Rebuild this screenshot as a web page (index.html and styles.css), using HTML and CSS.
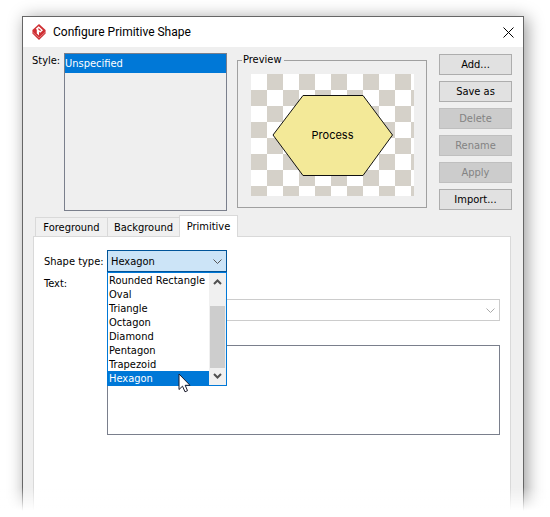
FILE: index.html
```html
<!DOCTYPE html>
<html lang="en">
<head>
<meta charset="utf-8">
<title>Configure Primitive Shape</title>
<link rel="stylesheet" href="styles.css">
</head>
<body>
<main class="dialog">
  <header class="titlebar">
    <svg class="logo" viewBox="0 0 14 16" aria-hidden="true">
      <path fill="#cf2f33" d="M7 0 13.600 6 13.600 9.500 7 16 .4 9.500 .4 6Z"/>
      <path fill="none" stroke="#fff" stroke-opacity=".6" stroke-width=".6" d="M.5 8 7 13.800 13.500 8"/>
      <path fill="#fff" d="M3.800 4.800 6.700 2.300 11 6.200 8.200 8.700 7 7.700 7 11.500 4.800 9.600V5.700Z"/>
      <path fill="#cf2f33" d="M6.800 4.200 9.100 6.200 8.100 7.100 5.900 5.100Z"/>
    </svg>
    <h1 class="title">Configure Primitive Shape</h1>
    <button class="close" type="button" aria-label="Close">
      <svg viewBox="0 0 11 11" aria-hidden="true"><path d="M.5 .5 10.500 10.500M10.500 .5 .5 10.500"/></svg>
    </button>
  </header>

  <section class="top">
    <label class="style-label" for="style-list">Style:</label>
    <select class="style-list" id="style-list" size="8">
      <option selected>Unspecified</option>
    </select>
    <fieldset class="preview">
      <legend>Preview</legend>
      <div class="canvas">
        <svg class="shape" viewBox="0 0 122 82" aria-hidden="true">
          <path d="M31 1.500H91L120.500 41 91 81.500H31L1 41Z"/>
        </svg>
        <span class="shape-text">Process</span>
      </div>
    </fieldset>
    <div class="actions">
      <button type="button">Add...</button>
      <button type="button">Save as</button>
      <button type="button" disabled>Delete</button>
      <button type="button" disabled>Rename</button>
      <button type="button" disabled>Apply</button>
      <button type="button">Import...</button>
    </div>
  </section>

  <nav class="tabs" role="tablist">
    <button class="tab" type="button" role="tab">Foreground</button>
    <button class="tab" type="button" role="tab">Background</button>
    <button class="tab active" type="button" role="tab" aria-selected="true">Primitive</button>
  </nav>

  <section class="panel" role="tabpanel">
    <label class="row-label" for="shape-type">Shape type:</label>
    <div class="combo open">
      <select id="shape-type"><option>Hexagon</option></select>
      <svg class="chevron" viewBox="0 0 9 5" aria-hidden="true"><path d="M.5 .5 4.500 4.500 8.500 .5"/></svg>
      <div class="popup">
        <select class="options" size="8" aria-label="Shapes">
          <option>Rounded Rectangle</option>
          <option>Oval</option>
          <option>Triangle</option>
          <option>Octagon</option>
          <option>Diamond</option>
          <option>Pentagon</option>
          <option>Trapezoid</option>
          <option selected>Hexagon</option>
        </select>
        <div class="scrollbar">
          <svg viewBox="0 0 9 6" aria-hidden="true"><path d="M1 5 4.500 1.500 8 5"/></svg>
          <div class="thumb"></div>
          <svg viewBox="0 0 9 6" aria-hidden="true"><path d="M1 1 4.500 4.500 8 1"/></svg>
        </div>
        <svg class="cursor" viewBox="0 0 13 20" aria-hidden="true">
          <path d="M1 1V16.500L4.500 13.200 7 18.800 9.500 17.700 7.200 12.300H12Z"/>
        </svg>
      </div>
    </div>
    <label class="row-label" for="text-source">Text:</label>
    <div class="combo source">
      <select id="text-source"><option></option></select>
      <svg class="chevron" viewBox="0 0 9 5" aria-hidden="true"><path d="M.5 .5 4.500 4.500 8.500 .5"/></svg>
    </div>
    <textarea class="text-area" aria-label="Text content"></textarea>
  </section>
</main>
</body>
</html>
```
FILE: styles.css
```css
* {
  box-sizing: border-box;
}

body {
  margin: 0;
  padding: 16px 26px 0 22px;
  min-height: 100vh;
  display: flex;
  overflow: hidden;
  background: #fff;
  color: #000;
  font: 11px/14px "DejaVu Sans Condensed", "Noto Sans", sans-serif;
}

/* The lower edge of the window dissolves into the page. */
body::after {
  content: "";
  position: fixed;
  inset: auto 0 0 0;
  height: 30px;
  background: linear-gradient(transparent, #fff 24px);
}

button,
select,
textarea {
  margin: 0;
  font: inherit;
  color: inherit;
  border-radius: 0;
  outline: none;
}

.dialog {
  flex: 1;
  min-width: 0;
  display: flex;
  flex-direction: column;
  border: 1px solid #666;
  border-bottom: 0;
  background: #efefef;
  box-shadow: 3px 2px 16px rgba(0, 0, 0, 0.4);
}

.titlebar {
  display: flex;
  align-items: center;
  height: 30px;
  padding: 0 9px;
  background: #fff;
}

.logo {
  width: 14px;
  height: 16px;
}

.title {
  flex: 1;
  margin: 0 0 0 7px;
  font: 12px/16px Roboto, sans-serif;
}

.close {
  display: flex;
  padding: 0;
  border: 0;
  background: none;
}

.close svg {
  width: 11px;
  height: 11px;
  stroke: #000;
}

.top {
  display: grid;
  grid-template-columns: 32px minmax(0, 163fr) minmax(0, 212fr) 73px;
  align-items: start;
  padding: 6px 11px 0 9px;
}

.style-label {
  padding-top: 1px;
}

.style-list {
  height: 158px;
  padding: 0;
  appearance: none;
  border: 1px solid #7a7f8c;
  background: #efefef;
  overflow: hidden;
}

.style-list option {
  min-height: 19px;
  padding: 3px 0 2px;
}

.style-list option:checked,
.options option:checked {
  background: #0078d7 linear-gradient(#0078d7, #0078d7);
  color: #fff;
}

.preview {
  min-width: 0;
  height: 155px;
  margin: 0 12px 0 10px;
  padding: 7px 12px 12px 13px;
  border: 1px solid #a0a0a0;
}

.preview legend {
  margin-left: -9px;
  padding: 0 3px 0 1px;
}

.canvas {
  height: 122px;
  display: grid;
  place-items: center;
  background: repeating-conic-gradient(#d5d1c9 0 25%, #fff 0 50%) 0 0 / 32px 32px;
}

.shape {
  grid-area: 1 / 1;
  width: 122px;
  height: 82px;
  fill: #f3e998;
  stroke: #111;
}

.shape-text {
  grid-area: 1 / 1;
  z-index: 1;
  font-family: Inter, sans-serif;
}

.actions {
  padding-top: 1px;
  display: flex;
  flex-direction: column;
  gap: 6px;
}

.actions button {
  height: 21px;
  padding: 0;
  border: 1px solid #adadad;
  background: #e1e1e1;
}

.actions button:disabled {
  border-color: #bfbfbf;
  background: #ccc;
  color: #838383;
}

.tabs {
  display: flex;
  align-items: flex-end;
  height: 21px;
  margin: 4px 12px 0;
}

.tab {
  width: 72px;
  height: 19px;
  padding: 2px 0 0;
  border: 1px solid #d9d9d9;
  border-width: 1px 0 0 1px;
  background: #f0f0f0;
}

.tab.active {
  position: relative;
  z-index: 1;
  width: 59px;
  height: 22px;
  margin-bottom: -1px;
  padding: 0;
  border-right-width: 1px;
  background: #fff;
}

.panel {
  flex: 1;
  display: grid;
  grid-template-columns: 63px minmax(0, 1fr);
  align-content: start;
  margin: 0 12px 0 10px;
  padding: 13px 10px 0;
  border: 1px solid #d9d9d9;
  border-bottom: 0;
  background: #fff;
}

.row-label {
  padding-top: 5px;
}

.combo {
  position: relative;
  height: 22px;
}

.combo > select {
  width: 100%;
  height: 100%;
  padding: 2px 3px 0;
  appearance: none;
  border: 1px solid #ccc;
  background: #fff;
}

.combo.open {
  width: 120px;
}

.combo.open > select {
  border-color: #005499;
  background: #cce4f7;
}

.chevron {
  position: absolute;
  right: 5px;
  top: 9px;
  width: 9px;
  height: 5px;
  fill: none;
  stroke: #555;
}

.source {
  margin-top: 27px;
}

.source .chevron {
  stroke: #aaa;
}

.popup {
  position: absolute;
  z-index: 2;
  top: 22px;
  left: 0;
  right: 0;
  display: flex;
  border: 1px solid #0078d7;
  background: #fff;
}

.options {
  flex: 1;
  min-width: 0;
  height: 112px;
  padding: 0;
  appearance: none;
  border: 0;
  background: #fff;
  overflow: hidden;
}

.options option {
  min-height: 14px;
  padding: 1px 1px 0;
}

.scrollbar {
  width: 17px;
  display: flex;
  flex-direction: column;
  align-items: center;
  justify-content: space-between;
  padding: 6px 0;
  background: #f0f0f0;
}

.scrollbar svg {
  width: 9px;
  height: 6px;
  fill: none;
  stroke: #505050;
  stroke-width: 2;
}

.thumb {
  width: 15px;
  height: 62px;
  margin-top: 16px;
  background: #cdcdcd;
}

.cursor {
  position: absolute;
  left: 70px;
  bottom: -8px;
  width: 13px;
  height: 20px;
  fill: #fff;
  stroke: #1a1a2a;
}

.text-area {
  grid-column: 2;
  width: 100%;
  height: 90px;
  margin-top: 24px;
  border: 1px solid #7a7f8c;
  background: #fff;
  resize: none;
}
```
